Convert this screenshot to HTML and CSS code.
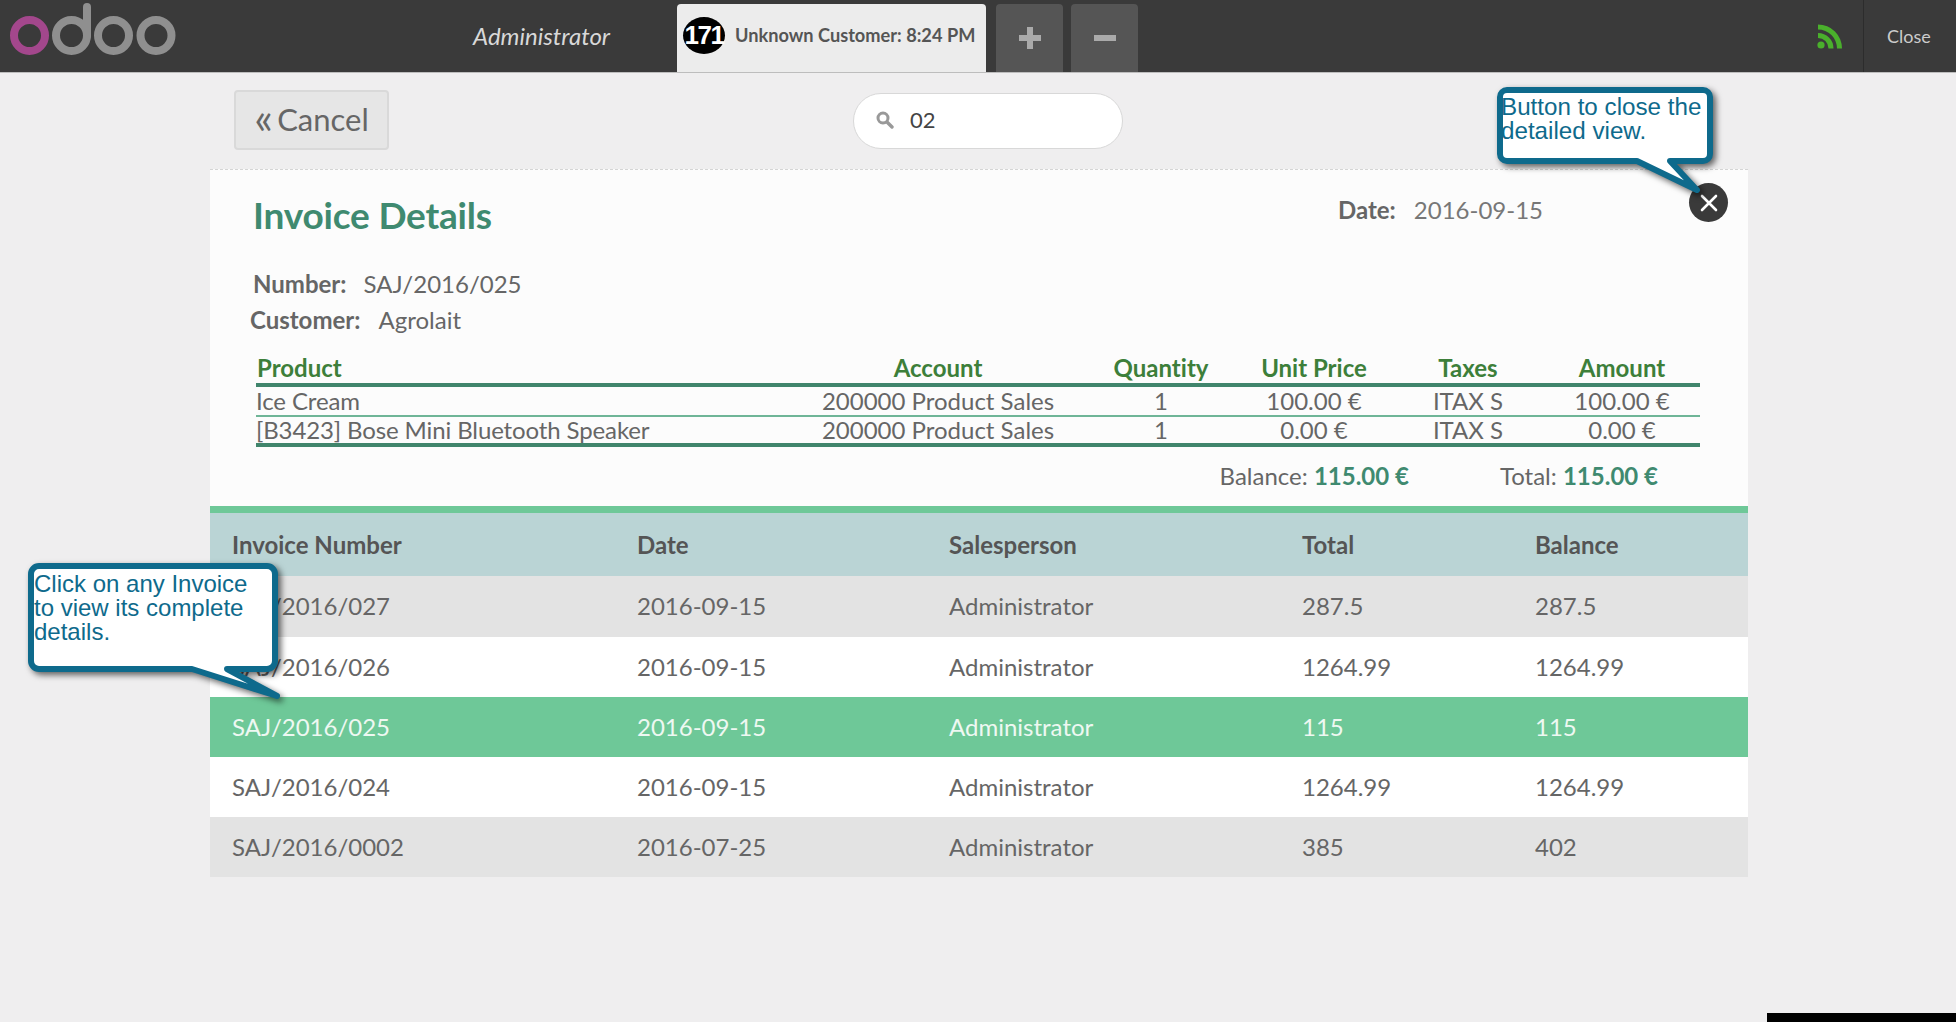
FILE: index.html
```html
<!DOCTYPE html>
<html lang="en">
<head>
<meta charset="utf-8">
<title>Point of Sale</title>
<link rel="stylesheet" href="styles.css">
</head>
<body>
<header class="topbar">
  <svg class="logo" width="180" height="60" viewBox="0 0 180 60" aria-label="odoo">
    <circle class="ring" cx="71.5" cy="35.5" r="15.5"/>
    <line class="ring" x1="87" y1="35.5" x2="87" y2="7" stroke-linecap="round"/>
    <circle class="ring" cx="113.5" cy="35.5" r="15.5"/>
    <circle class="ring" cx="156" cy="35.5" r="15.5"/>
    <circle class="ring ring-main" cx="29.5" cy="35.5" r="15.5"/>
  </svg>
  <div class="user">Administrator</div>
  <div class="tab">
    <span class="badge">171</span>
    <span class="tab-label">Unknown Customer: 8:24 PM</span>
  </div>
  <button class="tab-btn" aria-label="Add order"><svg width="24" height="24" viewBox="0 0 24 24"><path d="M9 1h6v8h8v6h-8v8H9v-8H1V9h8z"/></svg></button>
  <button class="tab-btn minus" aria-label="Remove order"><svg width="24" height="8" viewBox="0 0 24 8"><rect x="1" y="1" width="22" height="6"/></svg></button>
  <svg class="rss" width="26" height="25" viewBox="0 0 26 25"><circle cx="4" cy="21" r="3.6"/><path d="M1 9a15.5 15.5 0 0 1 15.5 15.5h-5a10.5 10.5 0 0 0-10.5-10.5z"/><path d="M1 0.5a24 24 0 0 1 24 24h-5a19 19 0 0 0-19-19z"/></svg>
  <div class="close-link">Close</div>
</header>

<main class="screen">
  <div class="toolbar">
    <button class="cancel"><span class="chev">«</span>Cancel</button>
    <div class="search">
      <svg width="18" height="18" viewBox="0 0 18 18"><circle cx="7" cy="7" r="5" fill="none" stroke="#999" stroke-width="3"/><path d="M11 11l5 5" stroke="#999" stroke-width="3.4" stroke-linecap="round"/></svg>
      <span>02</span>
    </div>
  </div>

  <section class="panel">
    <div class="details">
      <div class="title-row">
        <h1>Invoice Details</h1>
        <div class="date"><b>Date:</b><span>2016-09-15</span></div>
      </div>
      <div class="meta number"><b>Number:</b><span>SAJ/2016/025</span></div>
      <div class="meta customer"><b>Customer:</b><span>Agrolait</span></div>
      <table class="lines">
        <colgroup><col class="c1"><col class="c2"><col class="c3"><col class="c4"><col class="c5"><col class="c6"></colgroup>
        <thead><tr><th>Product</th><th>Account</th><th>Quantity</th><th>Unit Price</th><th>Taxes</th><th>Amount</th></tr></thead>
        <tbody>
          <tr><td>Ice Cream</td><td>200000 Product Sales</td><td>1</td><td>100.00 €</td><td>ITAX S</td><td>100.00 €</td></tr>
          <tr><td>[B3423] Bose Mini Bluetooth Speaker</td><td>200000 Product Sales</td><td>1</td><td>0.00 €</td><td>ITAX S</td><td>0.00 €</td></tr>
        </tbody>
      </table>
      <div class="totals">
        <span class="bal">Balance: <b>115.00 €</b></span>
        <span>Total: <b>115.00 €</b></span>
      </div>
    </div>
    <table class="invoices">
      <colgroup><col class="i1"><col class="i2"><col class="i3"><col class="i4"><col class="i5"></colgroup>
      <thead><tr><th>Invoice Number</th><th>Date</th><th>Salesperson</th><th>Total</th><th>Balance</th></tr></thead>
      <tbody>
        <tr class="grey"><td>SAJ/2016/027</td><td>2016-09-15</td><td>Administrator</td><td>287.5</td><td>287.5</td></tr>
        <tr><td>SAJ/2016/026</td><td>2016-09-15</td><td>Administrator</td><td>1264.99</td><td>1264.99</td></tr>
        <tr class="selected"><td>SAJ/2016/025</td><td>2016-09-15</td><td>Administrator</td><td>115</td><td>115</td></tr>
        <tr><td>SAJ/2016/024</td><td>2016-09-15</td><td>Administrator</td><td>1264.99</td><td>1264.99</td></tr>
        <tr class="grey"><td>SAJ/2016/0002</td><td>2016-07-25</td><td>Administrator</td><td>385</td><td>402</td></tr>
      </tbody>
    </table>
    <button class="panel-close" aria-label="Close details"><svg width="20" height="20" viewBox="0 0 20 20"><path d="M3 3l14 14M17 3L3 17" stroke="#fff" stroke-width="2.6" stroke-linecap="round"/></svg></button>
  </section>
</main>

<aside class="callout callout-close">
  <svg width="240" height="130" viewBox="0 0 240 130"><path class="bubble" d="M16 14H212a7 7 0 0 1 7 7V78a7 7 0 0 1-7 7H179L206 114 146 85H16a7 7 0 0 1-7-7V21a7 7 0 0 1 7-7z"/></svg>
  <p>Button to close the detailed view.</p>
</aside>
<aside class="callout callout-invoice">
  <svg width="280" height="160" viewBox="0 0 280 160"><path class="bubble" d="M19 13H247a8 8 0 0 1 8 8V108a8 8 0 0 1-8 8H207L257 143 172 116H19a8 8 0 0 1-8-8V21a8 8 0 0 1 8-8z"/></svg>
  <p>Click on any Invoice to view its complete details.</p>
</aside>
<div class="blackbar"></div>
</body>
</html>
```
FILE: styles.css
```css
* { box-sizing: border-box; }
html, body { margin: 0; height: 100%; }
body {
  position: relative;
  width: 1956px;
  height: 1022px;
  overflow: hidden;
  background: #efeeef;
  color: #666;
  font-family: Lato, "Open Sans", sans-serif;
  font-size: 24px;
  font-variant-ligatures: none;
}
button { font-family: inherit; cursor: pointer; font-variant-ligatures: none; }

.topbar {
  display: flex;
  align-items: flex-end;
  height: 73px;
  background: #3a3a3a;
  border-bottom: 1px solid #bdbdbd;
}
.logo { flex: none; align-self: flex-start; }
.ring { fill: none; stroke: #8f8f8f; stroke-width: 8; }
.ring-main { stroke: #a3478c; }
.user {
  align-self: center;
  width: 138px;
  margin-left: 293px;
  padding-bottom: 1px;
  color: #d8d8d8;
  font-size: 24px;
  font-style: italic;
  white-space: nowrap;
}
.tab {
  display: flex;
  align-items: center;
  gap: 10px;
  width: 309px;
  height: 68px;
  margin-left: 66px;
  padding: 0 0 6px 6px;
  background: #ececec;
  border-radius: 4px 4px 0 0;
}
.badge {
  flex: none;
  width: 42px;
  height: 37px;
  border-radius: 50%;
  background: #000;
  color: #fff;
  font-family: "Liberation Sans", sans-serif;
  font-size: 26px;
  font-weight: 700;
  line-height: 37px;
  text-align: center;
  letter-spacing: -1.5px;
}
.tab-label { color: #555; font-size: 18.2px; font-weight: 700; white-space: nowrap; }
.tab-btn {
  display: flex;
  align-items: center;
  justify-content: center;
  width: 67px;
  height: 68px;
  margin-left: 10px;
  padding: 0;
  border: 0;
  border-radius: 4px 4px 0 0;
  background: #555;
}
.tab-btn.minus { margin-left: 8px; }
.tab-btn svg { fill: #aaa; }
.rss { align-self: center; fill: #4ab02c; margin-left: auto; margin-right: 20px; flex: none; }
.close-link {
  align-self: stretch;
  display: flex;
  align-items: center;
  width: 93px;
  padding-left: 23px;
  border-left: 1px solid #2c2c2c;
  color: #ccc;
  font-size: 18px;
}

.screen { display: flex; flex-direction: column; padding: 0 208px 0 210px; }
.toolbar { display: flex; align-items: center; height: 96px; padding: 0 0 2px 24px; }
.cancel {
  display: flex;
  align-items: center;
  justify-content: center;
  gap: 4px;
  width: 155px;
  height: 60px;
  padding: 0 0 3px;
  border: 2px solid #d9d9d9;
  border-radius: 4px;
  background: #e6e6e6;
  color: #666;
  font-size: 31px;
}
.chev { font-size: 44px; line-height: 1; margin-top: -4px; }
.search {
  display: flex;
  align-items: center;
  gap: 16px;
  width: 270px;
  height: 56px;
  margin: 2px 0 0 464px;
  padding: 0 0 3px 22px;
  border: 1px solid #d8d8d8;
  border-radius: 28px;
  background: #fff;
  color: #444;
  font-size: 22px;
}

.panel { position: relative; background: #fcfcfc; border-top: 1px dashed #d5d5d5; }
.details { height: 336px; padding: 0 40px 0 43px; }
.title-row { display: flex; align-items: flex-start; justify-content: space-between; height: 96px; }
h1 { margin: 22px 0 0; color: #3f8a70; font-size: 37px; font-weight: 700; line-height: 46px; letter-spacing: -.2px; }
.date { margin: 25px 165px 0 0; line-height: 30px; color: #777; }
.date b { margin-right: 18px; color: #666; }
.meta { height: 36px; line-height: 36px; color: #666; }
.meta b { margin-right: 17px; color: #666; }
.customer { margin-left: -3px; }
.customer b { margin-right: 18px; }
.lines {
  width: 1444px;
  margin: 16px 0 0 3px;
  border-collapse: separate;
  border-spacing: 0;
  table-layout: fixed;
}
.c1 { width: 534px; } .c2 { width: 296px; } .c3 { width: 150px; }
.c4 { width: 156px; } .c5 { width: 152px; } .c6 { width: 156px; }
.lines th { height: 33px; padding: 0 0 2px; color: #3d7f3a; font-weight: 700; line-height: 26px; text-align: center; border-bottom: 4px solid #40856c; }
.lines td { height: 30px; padding: 0; text-align: center; line-height: 26px; color: #666; }
.lines tbody tr:first-child td { border-bottom: 2px solid #6fb597; }
.lines tbody tr:last-child td { border-bottom: 4px solid #40856c; }
.lines th:first-child { text-align: left; padding-left: 1px; }
.lines td:first-child { text-align: left; white-space: nowrap; letter-spacing: -.12px; }
.totals { display: flex; justify-content: flex-end; gap: 91px; margin-top: 14px; padding-right: 50px; line-height: 30px; color: #666; }
.totals b { color: #3f8a70; }

.invoices { width: 100%; border-collapse: separate; border-spacing: 0; table-layout: fixed; }
.i1 { width: 427px; } .i2 { width: 312px; } .i3 { width: 353px; } .i4 { width: 233px; } .i5 { width: auto; }
.invoices th { height: 70px; padding: 0 0 0 22px; border-top: 7px solid #6ec898; background: #bad4d5; background-clip: padding-box; color: #555; font-weight: 700; text-align: left; }
.invoices th + th { padding-left: 0; }
.invoices td { height: 60px; padding: 0 0 2px 22px; background: #fff; color: #666; }
.invoices td + td { padding-left: 0; }
.invoices tbody tr:first-child td { height: 61px; }
.invoices .grey td { background: #e3e3e3; }
.invoices .selected td { background: #6ec898; color: #eef8f2; }

.panel-close {
  position: absolute;
  top: 13px;
  left: 1479px;
  display: flex;
  align-items: center;
  justify-content: center;
  width: 39px;
  height: 39px;
  padding: 0;
  border: 0;
  border-radius: 50%;
  background: #3a3a3a;
}

.callout { position: absolute; }
.callout svg { display: block; overflow: visible; }
.bubble { fill: #fff; stroke: #0e6a8c; stroke-width: 6; stroke-linejoin: round; filter: drop-shadow(3px 3px 3px rgba(0,0,0,.6)); }
.callout p {
  position: absolute;
  margin: 0;
  color: #0e6a8c;
  font-family: "Liberation Sans", Arial, sans-serif;
  font-size: 24.2px;
  line-height: 24px;
}
.callout-close { top: 76px; left: 1491px; }
.callout-close p { top: 19px; left: 10px; width: 205px; }
.callout-invoice { top: 553px; left: 20px; }
.callout-invoice p { top: 19px; left: 14px; width: 222px; font-size: 24px; }

.blackbar { position: absolute; right: 0; bottom: 0; width: 189px; height: 9px; background: #000; }
```
